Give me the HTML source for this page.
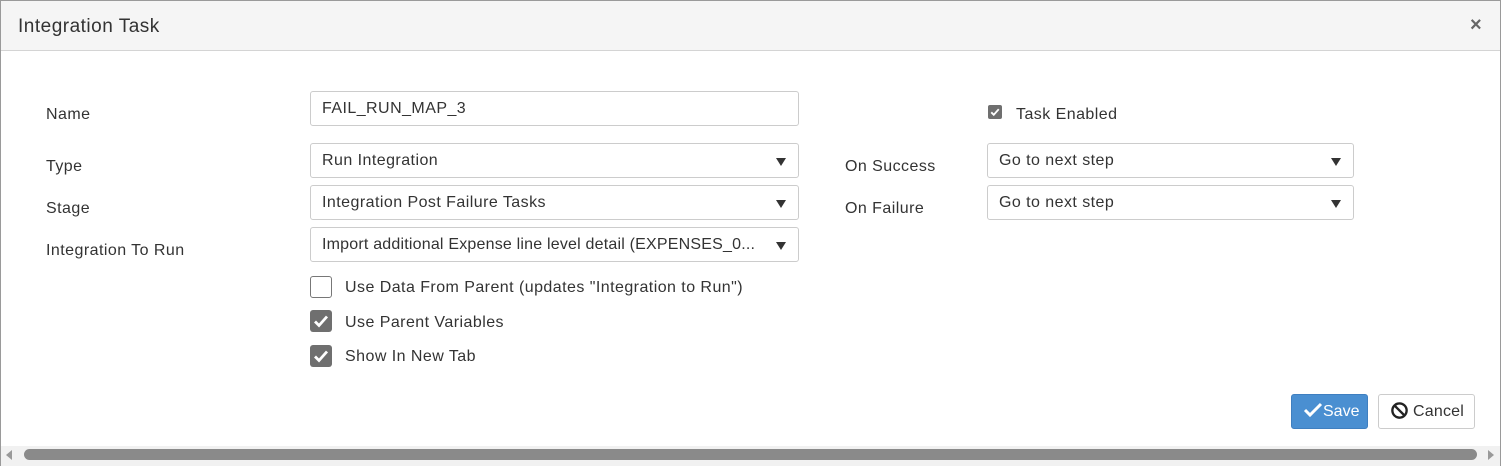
<!DOCTYPE html>
<html><head><style>
*{box-sizing:border-box;margin:0;padding:0}
body{width:1501px;height:466px;background:#fff;font-family:"Liberation Sans",sans-serif;color:#333;position:relative;overflow:hidden;font-size:16px;letter-spacing:0.45px}
.frame{position:absolute;left:0;top:0;width:1501px;height:466px;border:1px solid #9a9a9a;border-bottom:none}
.hdr{position:absolute;left:1px;top:1px;width:1499px;height:50px;background:#f5f5f5;border-bottom:1px solid #d4d4d4}
.title{position:absolute;left:17px;top:15px;font-size:19px;color:#333;letter-spacing:0.5px}
.x{position:absolute;left:1469px;top:13px;font-size:20px;color:#666;font-weight:bold}
.lbl{position:absolute;font-size:16px;color:#333}
.inp{position:absolute;height:35px;border:1px solid #ccc;border-radius:3px;padding-left:11px;line-height:34px;font-size:16px;color:#333;background:#fff;white-space:nowrap}
.inp.sel:after{content:"";position:absolute;right:12px;top:14px;border-left:5px solid transparent;border-right:5px solid transparent;border-top:8px solid #333}
.cb{position:absolute;width:22px;height:22px;border-radius:3px;background:#6f6f6f}
.cb.off{background:#fff;border:1px solid #777}
.cb svg{position:absolute;left:3px;top:3px}
.btn{position:absolute;height:35px;border-radius:3px;font-size:16px;line-height:33px}
</style></head><body>
<div class="frame"></div>
<div class="hdr"><div class="title">Integration Task</div><div class="x">×</div></div>

<div class="lbl" style="left:46px;top:106px">Name</div>
<div class="inp" style="left:310px;top:91px;width:489px">FAIL_RUN_MAP_3</div>
<div class="lbl" style="left:46px;top:158px">Type</div>
<div class="inp sel" style="left:310px;top:143px;width:489px">Run Integration</div>
<div class="lbl" style="left:46px;top:200px">Stage</div>
<div class="inp sel" style="left:310px;top:185px;width:489px">Integration Post Failure Tasks</div>
<div class="lbl" style="left:46px;top:242px">Integration To Run</div>
<div class="inp sel" style="left:310px;top:227px;width:489px;letter-spacing:0.2px">Import additional Expense line level detail (EXPENSES_0...</div>

<div class="cb off" style="left:310px;top:276px"></div>
<div class="lbl" style="left:345px;top:279px">Use Data From Parent (updates "Integration to Run")</div>
<div class="cb" style="left:310px;top:310px"><svg width="16" height="16" viewBox="0 0 16 16"><path d="M2 8.5l4 4 8-9" fill="none" stroke="#fff" stroke-width="2.8"/></svg></div>
<div class="lbl" style="left:345px;top:314px">Use Parent Variables</div>
<div class="cb" style="left:310px;top:345px"><svg width="16" height="16" viewBox="0 0 16 16"><path d="M2 8.5l4 4 8-9" fill="none" stroke="#fff" stroke-width="2.8"/></svg></div>
<div class="lbl" style="left:345px;top:348px">Show In New Tab</div>

<div class="cb" style="left:988px;top:105px;width:14px;height:14px;border-radius:2px"><svg style="left:2px;top:2px" width="10" height="10" viewBox="0 0 16 16"><path d="M2 8.5l4 4 8-9" fill="none" stroke="#fff" stroke-width="3"/></svg></div>
<div class="lbl" style="left:1016px;top:106px">Task Enabled</div>
<div class="lbl" style="left:845px;top:158px">On Success</div>
<div class="inp sel" style="left:987px;top:143px;width:367px">Go to next step</div>
<div class="lbl" style="left:845px;top:200px">On Failure</div>
<div class="inp sel" style="left:987px;top:185px;width:367px">Go to next step</div>

<div class="btn" style="left:1291px;top:394px;width:77px;background:#4a8fd1;border:1px solid #3f7fc0;color:#fff;padding-left:11px;letter-spacing:0"><svg width="20" height="16" viewBox="0 0 20 16" style="vertical-align:-2px"><path d="M2 8l5 5 11-11" fill="none" stroke="#fff" stroke-width="3"/></svg>Save</div>
<div class="btn" style="left:1378px;top:394px;width:97px;background:#fff;border:1px solid #ccc;color:#333;padding-left:11px;letter-spacing:0.2px"><svg width="19" height="19" viewBox="0 0 20 20" style="vertical-align:-4px;margin-right:4px"><circle cx="10" cy="10" r="7.5" fill="none" stroke="#222" stroke-width="2.5"/><path d="M5 5l10 10" stroke="#222" stroke-width="2.5"/></svg>Cancel</div>

<div style="position:absolute;left:1px;top:446px;width:1499px;height:20px;background:#f1f1f1"></div>
<div style="position:absolute;left:24px;top:449px;width:1453px;height:11px;border-radius:6px;background:#8a8a8a"></div>
<div style="position:absolute;left:6px;top:450px;border-top:5px solid transparent;border-bottom:5px solid transparent;border-right:6px solid #999"></div>
<div style="position:absolute;left:1488px;top:450px;border-top:5px solid transparent;border-bottom:5px solid transparent;border-left:6px solid #999"></div>
</body></html>
